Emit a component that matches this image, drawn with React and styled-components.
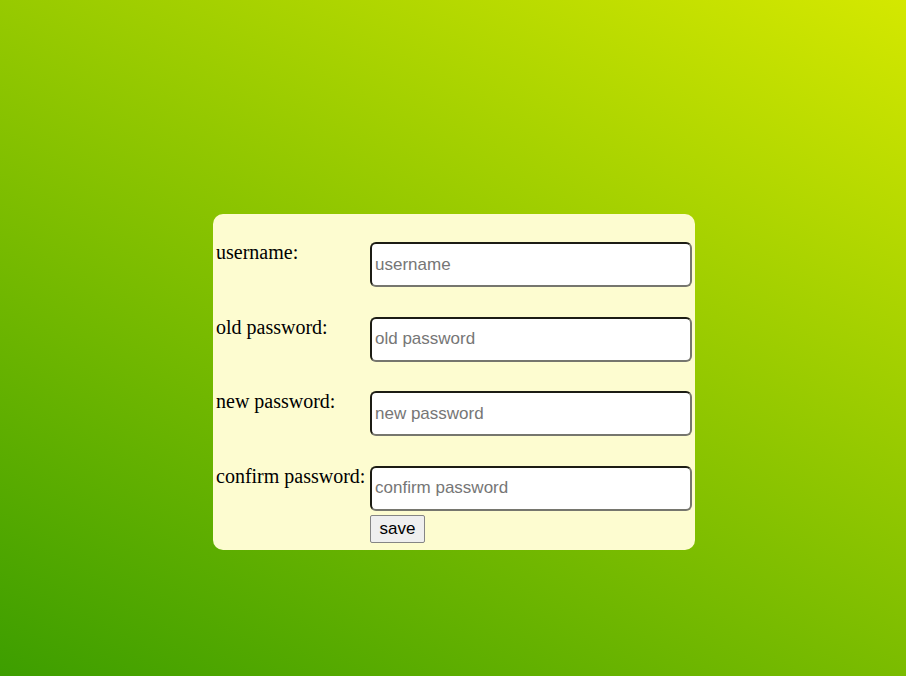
import React from "react"
import styled, { createGlobalStyle } from "styled-components"

const GlobalStyle = createGlobalStyle`
  html, body {
    margin: 0;
    height: 100%;
  }
  body {
    background: linear-gradient(27deg, #3d9e00, #d4e800);
    font-family: "Liberation Serif", "Times New Roman", serif;
  }
  #root {
    height: 100%;
  }
`

const Page = styled.main`
  height: 100%;
  display: flex;
  justify-content: center;
  align-items: flex-start;
  padding-top: 214px;
  padding-left: 2px;
  box-sizing: border-box;
`

const Card = styled.form`
  width: 482px;
  box-sizing: border-box;
  padding: 26px 3px 7px 3px;
  background: #fdfcd0;
  border-radius: 10px;
  display: grid;
  grid-template-columns: 151px 322px;
  column-gap: 3px;
  row-gap: 27.67px;
  align-items: start;
`

const Label = styled.label`
  font-size: 20px;
  line-height: 23px;
  padding-top: 1px;
  color: #000;
`

const Field = styled.div`
  display: flex;
  flex-direction: column;
  align-items: flex-start;
  gap: 4px;
  padding-top: 2px;
`

const Input = styled.input`
  width: 322px;
  height: 45px;
  box-sizing: border-box;
  padding: 1px 2px 1px 3px;
  border: 2px solid;
  border-color: #1c1c14 #76766e #76766e #1c1c14;
  border-radius: 6px;
  background: #fff;
  font-family: "Liberation Sans", Arial, sans-serif;
  font-size: 17px;
  color: #000;
  outline: none;

  &::placeholder {
    color: #767676;
  }
`

const SaveButton = styled.button`
  font-family: "Liberation Sans", Arial, sans-serif;
  font-size: 17px;
  line-height: 20px;
  height: 28px;
  padding: 3px 8.5px;
  background: #efefef;
  border: 1px solid #858585;
  border-radius: 2px;
  color: #000;
  cursor: pointer;
`

const fields = [
  { id: "username", label: "username:", type: "text" },
  { id: "old password", label: "old password:", type: "password" },
  { id: "new password", label: "new password:", type: "password" },
  { id: "confirm password", label: "confirm password:", type: "password" },
]

export default function App() {
  return (
    <>
      <GlobalStyle />
      <Page>
        <Card onSubmit={(e) => e.preventDefault()}>
          {fields.map((f, i) => (
            <React.Fragment key={f.id}>
              <Label htmlFor={f.id}>{f.label}</Label>
              <Field>
                <Input id={f.id} type={f.type} placeholder={f.id} />
                {i === fields.length - 1 && (
                  <SaveButton type="submit">save</SaveButton>
                )}
              </Field>
            </React.Fragment>
          ))}
        </Card>
      </Page>
    </>
  )
}
